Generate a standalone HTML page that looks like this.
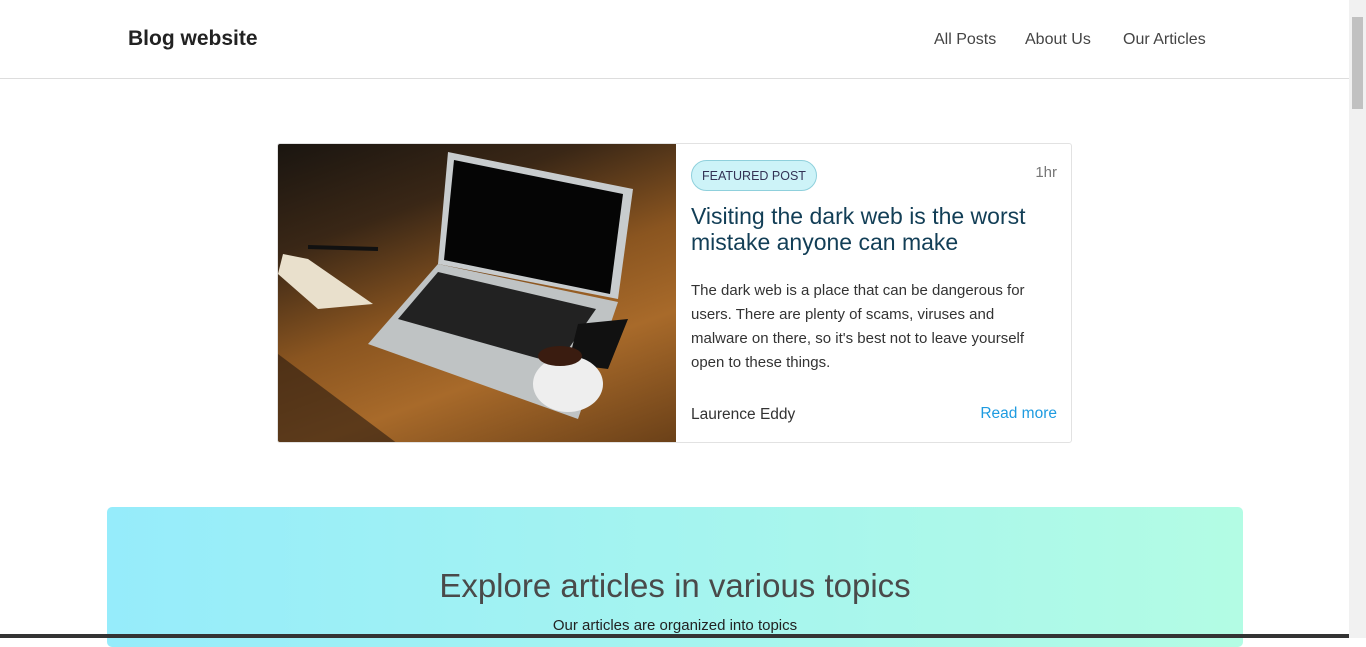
<!DOCTYPE html>
<html><head><meta charset="utf-8"><style>
*{box-sizing:border-box;margin:0;padding:0}
body{width:1366px;height:638px;overflow:hidden;background:#fff;font-family:"Liberation Sans",sans-serif;position:relative}
.nav{position:absolute;left:0;top:0;width:1349px;height:79px;border-bottom:1px solid #ddd}
.brand{position:absolute;left:128px;top:27px;font-size:21px;font-weight:bold;color:#222}
.links{position:absolute;top:31px;font-size:16px;color:#444}
.sb{position:absolute;right:0;top:0;width:17px;height:638px;background:#f1f1f1}
.sb i{position:absolute;left:3px;top:17px;width:11px;height:92px;background:#c1c1c1}
.card{position:absolute;left:277px;top:143px;width:795px;height:300px;border:1px solid #e2e2e2;border-radius:3px;overflow:hidden}
.img{position:absolute;left:0;top:0;width:398px;height:300px;background:linear-gradient(160deg,#1a1510 0%,#3a2716 25%,#8a5520 50%,#a86a2a 70%,#6a4018 100%)}
.badge{position:absolute;left:413px;top:16px;padding:0 10px;height:31px;line-height:31px;border:1px solid #8fd0dc;background:#cdf3f8;border-radius:16px;font-size:12.5px;color:#335}
.time{position:absolute;right:14px;top:20px;color:#777;font-size:15px}
h2{position:absolute;left:413px;top:59px;width:370px;font-weight:normal;font-size:23px;line-height:26px;color:#123e56}
p.d{position:absolute;left:413px;top:135px;width:356px;font-size:15px;line-height:24px;color:#333}
.auth{position:absolute;left:413px;top:262px;font-size:15.5px;color:#333}
.rm{position:absolute;right:14px;top:261px;font-size:15.5px;color:#1e9be0}
.hero{position:absolute;left:107px;top:507px;width:1136px;height:140px;border-radius:5px;background:linear-gradient(90deg,#96ecfb,#b3fce4)}
.hero h1{position:absolute;width:100%;top:60px;text-align:center;font-weight:normal;font-size:33px;color:#4a4a4a}
.hero div{position:absolute;width:100%;top:110px;text-align:center;font-size:15px;color:#222}
.bot{position:absolute;left:0;top:634px;width:1349px;height:4px;background:#333}
</style></head><body>
<div class="nav"><div class="brand">Blog website</div>
<span class="links" style="left:934px">All Posts</span><span class="links" style="left:1025px">About Us</span><span class="links" style="left:1123px">Our Articles</span></div>
<div class="card">
<div class="img">
<svg width="398" height="300" viewBox="0 0 398 300">
<path d="M0 300 L0 210 L120 300Z" fill="#2a1a10" opacity=".6"/>
<path d="M170 8 L355 45 L340 155 L160 120Z" fill="#c8ccce"/>
<path d="M176 16 L345 50 L332 150 L166 116Z" fill="#050505"/>
<path d="M160 120 L340 158 L300 275 L90 200Z" fill="#bfc3c4"/>
<path d="M160 128 L318 165 L280 220 L120 175Z" fill="#222"/>
<path d="M95 160 L30 115 L5 110 L0 130 L40 165Z" fill="#e9e0cc"/>
<path d="M30 103 L100 105" stroke="#111" stroke-width="4"/>
<path d="M300 180 L350 175 L330 225 L290 220Z" fill="#111"/>
<ellipse cx="290" cy="240" rx="35" ry="28" fill="#eee"/>
<ellipse cx="282" cy="212" rx="22" ry="10" fill="#3a1c10"/>
</svg></div>
<div class="badge">FEATURED POST</div><div class="time">1hr</div>
<h2>Visiting the dark web is the worst mistake anyone can make</h2>
<p class="d">The dark web is a place that can be dangerous for users. There are plenty of scams, viruses and malware on there, so it's best not to leave yourself open to these things.</p>
<div class="auth">Laurence Eddy</div><div class="rm">Read more</div>
</div>
<div class="hero"><h1>Explore articles in various topics</h1><div>Our articles are organized into topics</div></div>
<div class="bot"></div>
<div class="sb"><i></i></div>
</body></html>
